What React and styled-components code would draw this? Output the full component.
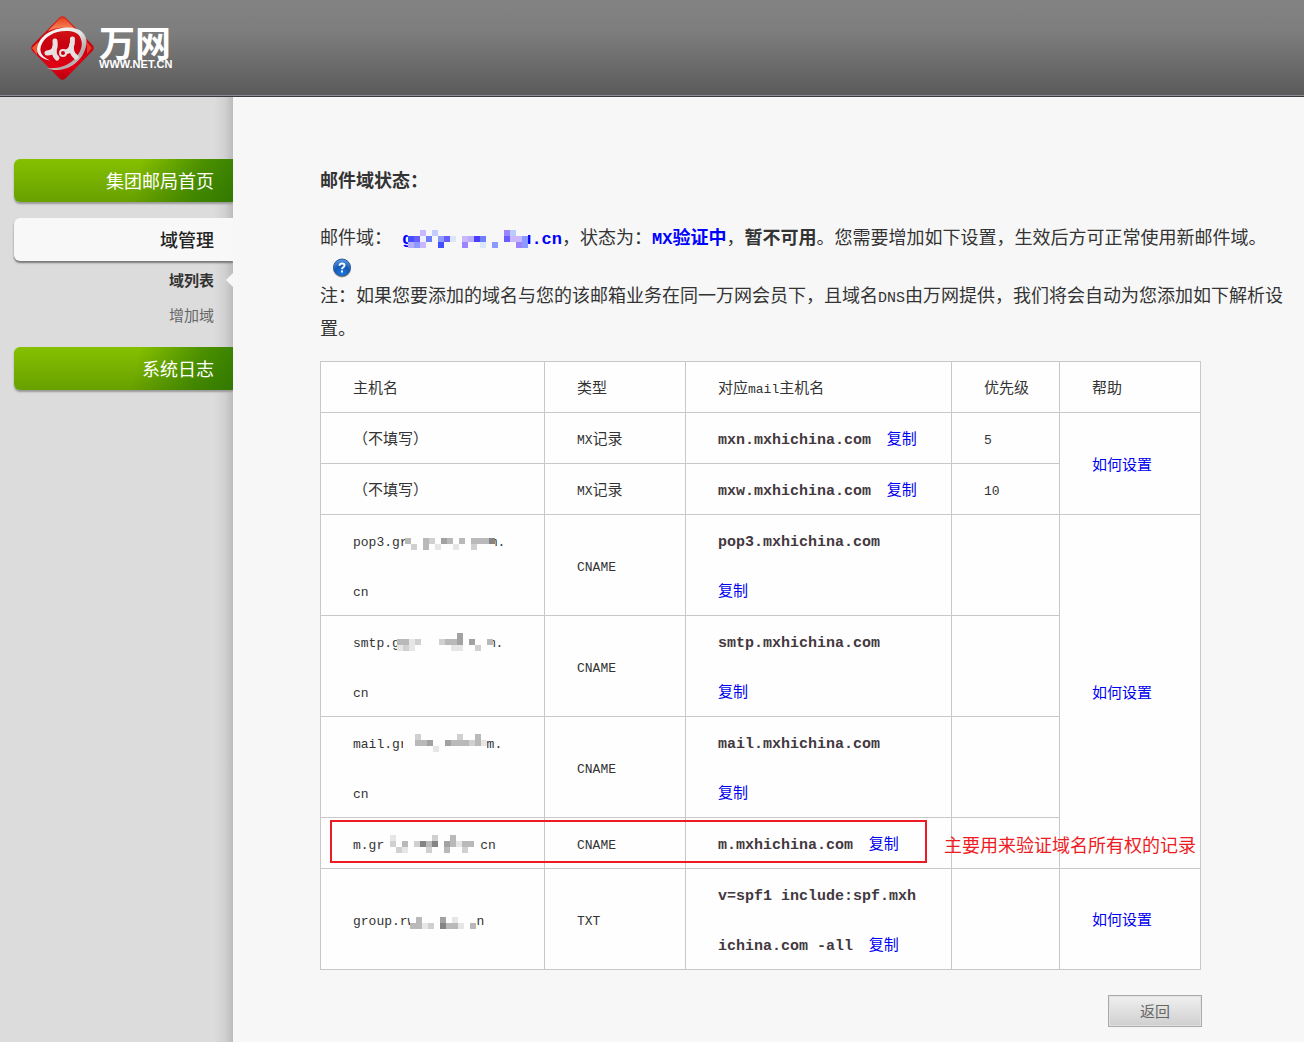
import React from "react";
import styled, { createGlobalStyle } from "styled-components";

const cjk = `"Noto Sans CJK SC", sans-serif`;
const mono = `"Liberation Mono", "Noto Sans CJK SC", monospace`;

const GlobalStyle = createGlobalStyle`
  * { box-sizing: border-box; }
  body { margin: 0; background: #f7f7f7; color: #333; font-family: ${cjk}; }
  p, h1, ul { margin: 0; padding: 0; }
  ul { list-style: none; }
  a { text-decoration: none; }
`;

const Page = styled.div`
  display: flex;
  flex-direction: column;
  min-height: 100vh;
`;

const Header = styled.header`
  display: flex;
  align-items: center;
  height: 97px;
  padding-left: 30px;
  background: linear-gradient(#828282 0%, #7e7e7e 32%, #5a5a5a 100%);
  border-bottom: 1px solid #3c3a40;
  box-shadow: inset 0 -1px 0 #8c8a94;
`;

const Brand = styled.a`
  display: flex;
  align-items: center;
  gap: 4px;
  color: #fff;
`;

const BrandText = styled.span`
  display: flex;
  flex-direction: column;
`;

const BrandName = styled.span`
  font-size: 36px;
  font-weight: 700;
  line-height: 36px;
`;

const BrandUrl = styled.span`
  font: bold 11px/10px "Liberation Sans", sans-serif;
  padding-bottom: 4px;
`;

const Body = styled.div`
  display: flex;
  flex: 1;
`;

const Sidebar = styled.nav`
  flex: 0 0 233px;
  padding: 62px 0 0 14px;
  background: linear-gradient(to right, rgba(0, 0, 0, 0) 214px, rgba(0, 0, 0, 0.05) 225px, rgba(0, 0, 0, 0.15) 233px), #dcdcdc;
`;

const NavLink = styled.a`
  display: block;
  height: 43px;
  padding-right: 19px;
  border-radius: 6px 0 0 6px;
  font-size: 18px;
  line-height: 43px;
  text-align: right;
  color: ${(p) => (p.$active ? "#222" : "#fff")};
  font-weight: ${(p) => (p.$active ? 500 : 400)};
  background: ${(p) =>
    p.$active
      ? "#f8f8f8"
      : "linear-gradient(105deg, rgba(40, 115, 0, 0) 55%, rgba(40, 115, 0, 0.6) 82%, rgba(40, 115, 0, 0.85) 100%), linear-gradient(#86c000, #68a000)"};
  box-shadow: 0 2px 2px ${(p) => (p.$active ? "#777" : "#999")};
  clip-path: inset(-4px 0 -4px -4px);
  margin-bottom: ${(p) => (p.$active ? 0 : 16)}px;
`;

const SubList = styled.ul`
  padding: 1px 0 15px;
`;

const SubItem = styled.li`
  display: flex;
  justify-content: flex-end;
  align-items: center;
  gap: 12px;
  height: 35px;
  padding-right: ${(p) => (p.$current ? 0 : 19)}px;
`;

const SubLink = styled.a`
  font-size: 15px;
  font-weight: ${(p) => (p.$current ? 700 : 400)};
  color: ${(p) => (p.$current ? "#333" : "#666")};
`;

const Pointer = styled.span`
  border: 7px solid transparent;
  border-left: 0;
  border-right-color: #f7f7f7;
`;

const Content = styled.main`
  flex: 1;
  min-width: 0;
  padding: 66px 20px 15px 87px;
`;

const Title = styled.h1`
  margin-bottom: 24px;
  font-size: 18px;
  line-height: 33px;
`;

const Text = styled.p`
  font-size: 18px;
  line-height: 33px;
  line-break: anywhere;
`;

const Latin = styled.span`
  font-family: ${mono};
  font-size: 15px;
  line-height: 1;
`;

const Status = styled.strong`
  color: #0000fe;
`;

const StatusLatin = styled.span`
  font-family: ${mono};
  font-size: 17px;
  line-height: 1;
`;

const Domain = styled(StatusLatin)`
  margin-left: 10px;
`;

const HelpButton = styled.button`
  display: block;
  width: 20px;
  height: 20px;
  margin: 5px 12px 0;
  padding: 0;
  border: 0;
  background: none;
`;

const TableArea = styled.div`
  position: relative;
  max-width: 881px;
  margin-top: 17px;
`;

const Table = styled.table`
  width: 100%;
  table-layout: fixed;
  border-collapse: collapse;
  background: #fefefe;
  font-size: 15px;
  line-height: 50px;

  th, td {
    padding: 0 32px;
    border: 1px solid #c8c8c8;
    text-align: left;
    font-weight: 400;
    white-space: nowrap;
  }
`;

const CellLatin = styled.span`
  font-family: ${mono};
  font-size: 13px;
  line-height: 1;
`;

const TargetCell = styled.td`
  && { white-space: normal; }
`;

const Target = styled.strong`
  font-family: ${mono};
  font-size: 15px;
  line-height: 1;
  word-break: break-all;
  color: #433840;
`;

const Link = styled.a`
  white-space: nowrap;
  color: #0000f0;
`;

const MosaicSvg = styled.svg`
  position: relative;
  display: inline-block;
  vertical-align: -4px;
  margin: 0 ${(p) => p.$end}px 0 ${(p) => p.$start}px;
  shape-rendering: crispEdges;
`;

const Highlight = styled.div`
  position: absolute;
  top: 459px;
  left: 10px;
  width: 597px;
  height: 43px;
  border: 2px solid #ed1c24;
`;

const Note = styled.div`
  position: absolute;
  top: 470px;
  left: 624px;
  font-size: 18px;
  line-height: 27px;
  white-space: nowrap;
  color: #ed1c24;
`;

const Actions = styled.div`
  display: flex;
  justify-content: flex-end;
  max-width: 882px;
  margin-top: 25px;
`;

const BackButton = styled.button`
  width: 94px;
  height: 32px;
  padding: 0;
  border: 1px solid #aaa;
  background: linear-gradient(#f0f0f0, #cfcfcf);
  box-shadow: inset 0 0 0 1px #e2e2e2;
  font: 15px/28px ${cjk};
  color: #666;
`;

const GREYS = { 1: "#e6e6e6", 2: "#d0d0d0", 3: "#b9b9b9", 4: "#a2a2a2", 5: "#848484" };
const BLUES = {
  a: "#4052ff", b: "#6b5cff", c: "#c9b8ff", d: "#c4ccff", e: "#9c84ff",
  f: "#b8ccff", g: "#f0eeff", h: "#6c80ff", i: "#8c9aff", j: "#d8e8fa",
  k: "#b8acff", l: "#4c3cff",
};

function Mosaic({ rows, palette = GREYS, base = "#fefefe", start = 0, end = 0 }) {
  const w = rows[0].length * 6;
  const h = rows.length * 6;
  return (
    <MosaicSvg width={w} height={h} $start={start} $end={end} aria-hidden="true">
      <rect width={w} height={h} fill={base} />
      {rows.flatMap((row, y) =>
        [...row].map((c, x) =>
          c === "." ? null : <rect key={`${x}-${y}`} x={x * 6} y={y * 6} width="6" height="6" fill={palette[c]} />
        )
      )}
    </MosaicSvg>
  );
}

function Logo() {
  return (
    <svg width="65" height="66" viewBox="0 0 65 66" aria-hidden="true">
      <defs>
        <linearGradient id="red" x1="0" y1="0" x2="0" y2="1">
          <stop offset="0" stopColor="#d8261a" />
          <stop offset="0.45" stopColor="#c80010" />
          <stop offset="0.8" stopColor="#e00014" />
          <stop offset="1" stopColor="#b8000c" />
        </linearGradient>
        <linearGradient id="glow" x1="0" y1="0" x2="0" y2="1">
          <stop offset="0" stopColor="#e04020" />
          <stop offset="1" stopColor="#ff9060" />
        </linearGradient>
        <linearGradient id="silver" x1="0" y1="0" x2="1" y2="1">
          <stop offset="0" stopColor="#ffffff" />
          <stop offset="0.5" stopColor="#e4e4e4" />
          <stop offset="0.75" stopColor="#b0a8a8" />
          <stop offset="1" stopColor="#ffffff" />
        </linearGradient>
      </defs>
      <path d="M29.500 2.500Q32.500 -0.200 35.500 2.500L62.500 30Q65 33 62.500 36L35.500 63.500Q32.500 66 29.500 63.500L2.500 36Q0 33 2.500 30Z" fill="url(#red)" />
      <path d="M30 3.500Q32.500 1.500 35 3.500L47 16Q32 9 18 16Z" fill="url(#glow)" />
      <path d="M2 33L8 27L7 40Z" fill="#f05a30" />
      <path d="M62 33L57 27L57 39Z" fill="#e83a28" />
      <path
        fillRule="evenodd"
        fill="url(#silver)"
        d="M20 45.500C10 44 5.500 38 7.500 31C11 19 25 12.500 38 12.500C50 12.500 57.500 19 56.500 29C54.500 43 42 54.500 28 55C24 55.300 20 54.500 17 53C27 54 36 51.500 43 45.500C49 39.500 53 33 51.500 26C50 18.500 45 16 36 16C24 16 14 22 11 31C9 37 12 42 20 45.500Z"
      />
      <path
        d="M25 26C26 33 24 38 17 38M24.500 32C24 38 24 40 27 43M42.500 24C43 31 40 37 35 37M41.500 30C41 36 42 39 46 42"
        fill="none"
        stroke="#e6e0e0"
        strokeWidth="5"
        strokeLinecap="round"
      />
      <circle cx="33" cy="38" r="3" fill="#c80010" stroke="#e6e0e0" strokeWidth="2" />
    </svg>
  );
}

function HelpIcon() {
  return (
    <svg width="20" height="20" viewBox="0 0 20 20" aria-hidden="true">
      <defs>
        <radialGradient id="ball" cx="0.5" cy="0.85" r="0.9">
          <stop offset="0" stopColor="#1a7ae0" />
          <stop offset="0.5" stopColor="#1458b8" />
          <stop offset="1" stopColor="#68a8e8" />
        </radialGradient>
      </defs>
      <circle cx="10" cy="10.500" r="9" fill="#555" opacity="0.6" />
      <circle cx="10" cy="9.500" r="8.500" fill="url(#ball)" stroke="#2c5c98" strokeWidth="1" />
      <path d="M7.500 7.800C7.500 4.600 12.600 4.700 12.500 7.500C12.400 9.300 10 9.200 10 11.200" fill="none" stroke="#fff" strokeWidth="2" />
      <rect x="9" y="12.500" width="2" height="2" fill="#fff" />
    </svg>
  );
}

const Copy = () => (
  <>
    <CellLatin>{"\u00a0 "}</CellLatin>
    <Link href="#copy">复制</Link>
  </>
);

const HowTo = () => <Link href="#help">如何设置</Link>;

const records = [
  { host: "（不填写）", type: <><CellLatin>MX</CellLatin>记录</>, target: "mxn.mxhichina.com", priority: "5", span: 2 },
  { host: "（不填写）", type: <><CellLatin>MX</CellLatin>记录</>, target: "mxw.mxhichina.com", priority: "10" },
  {
    host: <CellLatin>pop3.gr<Mosaic start={-3} end={-5} rows={["3..32.43.3.3335", ".2.3.1..1..2..."]} />m.<br />cn</CellLatin>,
    type: <CellLatin>CNAME</CellLatin>, target: "pop3.mxhichina.com", span: 4,
  },
  {
    host: <CellLatin>smtp.g<Mosaic start={-3} end={-5} rows={["..........4.....", "3312...2334.4..3", "121......11..2.."]} />m.<br />cn</CellLatin>,
    type: <CellLatin>CNAME</CellLatin>, target: "smtp.mxhichina.com",
  },
  {
    host: <CellLatin>mail.gr<Mosaic start={-5} rows={["..2......2..3.", "..334..4333231", ".....1........"]} />m.<br />cn</CellLatin>,
    type: <CellLatin>CNAME</CellLatin>, target: "mail.mxhichina.com",
  },
  {
    host: <CellLatin>m.gr<Mosaic rows={[".1......2..3....", ".2.3.2535.43133.", "..21...2..3..2.."]} />cn</CellLatin>,
    type: <CellLatin>CNAME</CellLatin>, target: "m.mxhichina.com",
  },
  {
    host: <CellLatin>group.rw<Mosaic start={-5} rows={[".3...4.1...", "3312.5331.3"]} />n</CellLatin>,
    type: <CellLatin>TXT</CellLatin>, target: "v=spf1 include:spf.mxhichina.com -all", span: 1,
  },
];

export default function App() {
  return (
    <Page>
      <GlobalStyle />
      <Header>
        <Brand href="#home">
          <Logo />
          <BrandText>
            <BrandName>万网</BrandName>
            <BrandUrl>WWW.NET.CN</BrandUrl>
          </BrandText>
        </Brand>
      </Header>
      <Body>
        <Sidebar>
          <NavLink href="#index">集团邮局首页</NavLink>
          <NavLink href="#domains" $active>域管理</NavLink>
          <SubList>
            <SubItem $current>
              <SubLink href="#list" $current>域列表</SubLink>
              <Pointer />
            </SubItem>
            <SubItem>
              <SubLink href="#add">增加域</SubLink>
            </SubItem>
          </SubList>
          <NavLink href="#logs">系统日志</NavLink>
        </Sidebar>
        <Content>
          <Title>邮件域状态：</Title>
          <Text>
            邮件域：
            <Status>
              <Domain>
                g
                <Mosaic
                  start={-4}
                  end={-7}
                  base="#f7f7f7"
                  palette={BLUES}
                  rows={["..c.d...........ef..", "abgh.ibj.cklh...bcci", "kic..a...e..j.i...ei"]}
                />
                u.cn
              </Domain>
            </Status>
            ，状态为：<Status><StatusLatin>MX</StatusLatin>验证中</Status>，<strong>暂不可用</strong>。您需要增加如下设置，生效后方可正常使用新邮件域。
          </Text>
          <HelpButton type="button" aria-label="帮助">
            <HelpIcon />
          </HelpButton>
          <Text>
            注：如果您要添加的域名与您的该邮箱业务在同一万网会员下，且域名<Latin>DNS</Latin>由万网提供，我们将会自动为您添加如下解析设置。
          </Text>
          <TableArea>
            <Table>
              <colgroup>
                <col width="224" />
                <col width="141" />
                <col width="266" />
                <col width="108" />
                <col width="141" />
              </colgroup>
              <thead>
                <tr>
                  <th>主机名</th>
                  <th>类型</th>
                  <th>对应<CellLatin>mail</CellLatin>主机名</th>
                  <th>优先级</th>
                  <th>帮助</th>
                </tr>
              </thead>
              <tbody>
                {records.map((r, i) => (
                  <tr key={i}>
                    <td>{r.host}</td>
                    <td>{r.type}</td>
                    <TargetCell>
                      <Target>{r.target}</Target>
                      <Copy />
                    </TargetCell>
                    <td><CellLatin>{r.priority}</CellLatin></td>
                    {r.span && <td rowSpan={r.span}><HowTo /></td>}
                  </tr>
                ))}
              </tbody>
            </Table>
            <Highlight />
            <Note>主要用来验证域名所有权的记录</Note>
          </TableArea>
          <Actions>
            <BackButton type="button">返回</BackButton>
          </Actions>
        </Content>
      </Body>
    </Page>
  );
}
